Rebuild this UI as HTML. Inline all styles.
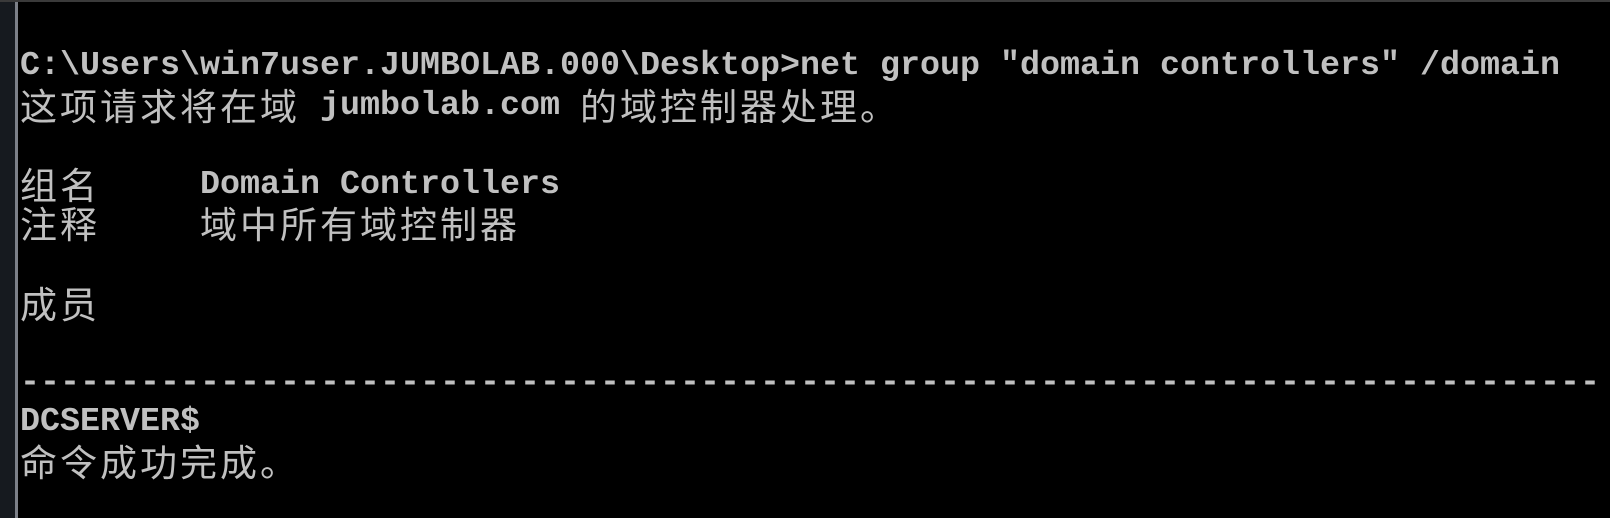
<!DOCTYPE html>
<html><head><meta charset="utf-8"><style>
html,body{margin:0;padding:0;background:#000;width:1610px;height:518px;overflow:hidden;position:relative}
.bar{position:absolute;left:0;top:0;width:15px;height:518px;background:#161a1f}
.bar2{position:absolute;left:15px;top:0;width:3px;height:518px;background:#7c8088}
.top{position:absolute;left:0;top:0;width:1610px;height:2px;background:#3a3a3a}
.l{position:absolute;left:20px;height:39.6px;line-height:39.6px;white-space:pre;color:#c0c0c0;font-family:"Liberation Mono",monospace;font-weight:bold;font-size:33.33px}
.c{font-family:"Noto Sans CJK SC","WenQuanYi Zen Hei",sans-serif;font-weight:normal;font-size:37px;letter-spacing:3px;vertical-align:top;line-height:39.6px;position:relative;top:-2px}
</style></head><body>
<div class="bar"></div><div class="bar2"></div><div class="top"></div>
<div class="l" style="top:47px">C:\Users\win7user.JUMBOLAB.000\Desktop&gt;net group "domain controllers" /domain</div>
<div class="l" style="top:86.6px"><span class="c">这项请求将在域</span> jumbolab.com <span class="c">的域控制器处理。</span></div>
<div class="l" style="top:165.8px"><span class="c">组名</span>     Domain Controllers</div>
<div class="l" style="top:205.4px"><span class="c">注释</span>     <span class="c">域中所有域控制器</span></div>
<div class="l" style="top:284.6px"><span class="c">成员</span></div>
<div class="l" style="top:363.8px">-------------------------------------------------------------------------------</div>
<div class="l" style="top:403.4px">DCSERVER$</div>
<div class="l" style="top:443px"><span class="c">命令成功完成。</span></div>
</body></html>
